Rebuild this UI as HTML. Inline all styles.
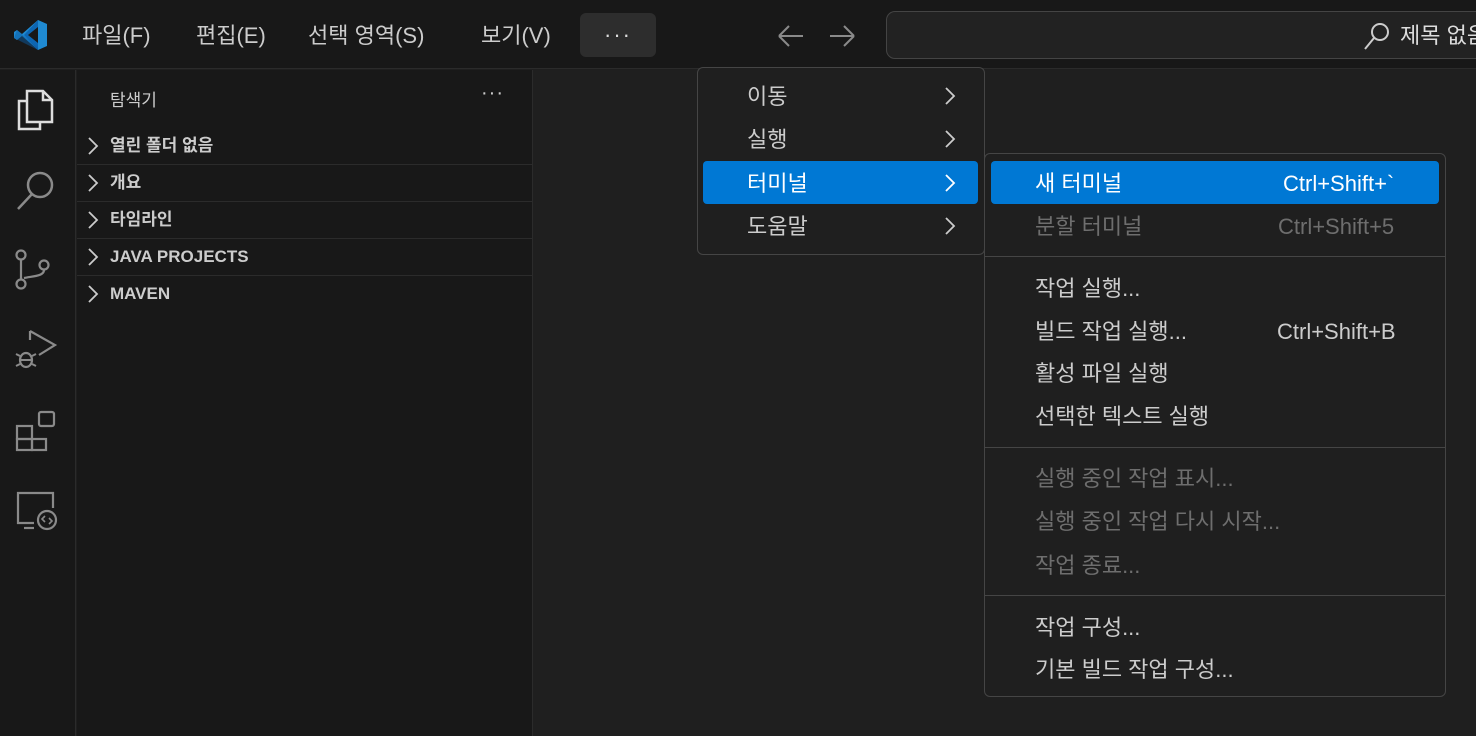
<!DOCTYPE html>
<html><head><meta charset="utf-8"><style>
*{margin:0;padding:0;box-sizing:border-box}
body{width:1476px;height:736px;overflow:hidden;background:#1f1f1f;font-family:"Liberation Sans","Noto Sans CJK KR",sans-serif;color:#ccc;position:relative}
.a{position:absolute;white-space:nowrap}
.t{font-size:22px;color:#ccc;line-height:30px}
.mi{position:absolute;font-size:22px;line-height:30px;color:#ccc;white-space:nowrap}
.dis{color:#6e6e6e}
.sc{position:absolute;font-size:22px;line-height:30px;white-space:nowrap}
.sep{position:absolute;left:1px;right:1px;height:1px;background:#454545}
.row{position:absolute;left:77px;width:455px;height:37px;border-bottom:1px solid #2b2b2b;font-size:17px;font-weight:bold;color:#ccc}
.row span{position:absolute;left:33px;top:7px;line-height:22px;height:22px}
.row svg{position:absolute;left:10px;top:9px}
</style></head><body>
<!-- title bar -->
<div class="a" style="left:0;top:0;width:1476px;height:69px;background:#181818;border-bottom:1px solid #2b2b2b"></div>
<svg class="a" style="left:14px;top:18px" width="34" height="34" viewBox="0 0 34 34"><path d="M24 2 L33 6 V28 L24 32 L8 18 L3 22 L0 20 V14 L3 12 L8 16 Z" fill="#1f8ad2"/><path d="M24 2 L10 17 L24 32 Z" fill="#0d66b3"/><path d="M24 9 V25 L14 17 Z" fill="#181818"/><path d="M3 12 L24 30 L24 32 L0 20 Z" fill="#0a5aa0" opacity=".5"/></svg>
<div class="a t" style="left:82px;top:21px">파일(F)</div>
<div class="a t" style="left:196px;top:21px">편집(E)</div>
<div class="a t" style="left:308px;top:21px">선택 영역(S)</div>
<div class="a t" style="left:481px;top:21px">보기(V)</div>
<div class="a" style="left:580px;top:13px;width:76px;height:44px;background:#2d2d2d;border-radius:6px"></div>
<div class="a" style="left:604px;top:22px;font-size:22px;color:#ddd;letter-spacing:2px">···</div>
<svg class="a" style="left:776px;top:22px" width="80" height="28" viewBox="0 0 80 28"><path d="M3 14 H27 M3 14 L13 4 M3 14 L13 24" stroke="#8a8a8a" stroke-width="2" fill="none"/><path d="M56 14 H80 M80 14 L70 4 M80 14 L70 24" stroke="#8a8a8a" stroke-width="2" fill="none" transform="translate(-2,0)"/></svg>
<div class="a" style="left:886px;top:11px;width:600px;height:48px;background:#222;border:1.5px solid #444;border-radius:9px"></div>
<svg class="a" style="left:1362px;top:21px" width="30" height="30" viewBox="0 0 30 30"><circle cx="18" cy="11" r="8" stroke="#ccc" stroke-width="2" fill="none"/><path d="M12 17 L3 28" stroke="#ccc" stroke-width="2"/></svg>
<div class="a t" style="left:1400px;top:21px;color:#ddd">제목 없음</div>
<!-- activity bar -->
<div class="a" style="left:0;top:70px;width:76px;height:666px;background:#181818;border-right:1px solid #2b2b2b"></div>
<svg class="a" style="left:14px;top:88px" width="42" height="44" viewBox="0 0 42 44"><path d="M13 3 H29 L38 12 V34 H13 Z M29 3 V12 H38" stroke="#ddd" stroke-width="2.5" fill="none"/><path d="M13 13 H5 V41 H26 V34" stroke="#ddd" stroke-width="2.5" fill="none"/></svg>
<svg class="a" style="left:14px;top:168px" width="44" height="44" viewBox="0 0 44 44"><circle cx="26" cy="17" r="12" stroke="#8a8a8a" stroke-width="2.5" fill="none"/><path d="M18 26 L4 41" stroke="#8a8a8a" stroke-width="2.5"/></svg>
<svg class="a" style="left:14px;top:248px" width="44" height="44" viewBox="0 0 44 44"><circle cx="7" cy="7" r="4.5" stroke="#8a8a8a" stroke-width="2.2" fill="none"/><circle cx="7" cy="36" r="4.5" stroke="#8a8a8a" stroke-width="2.2" fill="none"/><circle cx="30" cy="17" r="4.5" stroke="#8a8a8a" stroke-width="2.2" fill="none"/><path d="M7 12 V31 M30 22 C30 28 20 28 10 30" stroke="#8a8a8a" stroke-width="2.2" fill="none"/></svg>
<svg class="a" style="left:14px;top:328px" width="44" height="44" viewBox="0 0 44 44"><path d="M16 3 L41 17 L25 27" stroke="#8a8a8a" stroke-width="2.2" fill="none"/><path d="M16 3 V12" stroke="#8a8a8a" stroke-width="2.2"/><ellipse cx="12" cy="32" rx="6" ry="7" stroke="#8a8a8a" stroke-width="2.2" fill="none"/><path d="M2 26 L6 28 M2 38 L6 36 M22 26 L18 28 M22 38 L18 36 M6 32 H18" stroke="#8a8a8a" stroke-width="2"/></svg>
<svg class="a" style="left:14px;top:408px" width="44" height="44" viewBox="0 0 44 44"><rect x="3" y="18" width="15" height="13" stroke="#8a8a8a" stroke-width="2.2" fill="none"/><rect x="3" y="31" width="15" height="11" stroke="#8a8a8a" stroke-width="2.2" fill="none"/><rect x="18" y="31" width="14" height="11" stroke="#8a8a8a" stroke-width="2.2" fill="none"/><rect x="25" y="4" width="15" height="14" rx="2" stroke="#8a8a8a" stroke-width="2.2" fill="none"/></svg>
<svg class="a" style="left:14px;top:488px" width="44" height="44" viewBox="0 0 44 44"><path d="M20 35 H4 V5 H39 V20" stroke="#8a8a8a" stroke-width="2.2" fill="none"/><path d="M10 40 H20" stroke="#8a8a8a" stroke-width="2.2"/><circle cx="33" cy="32" r="9" stroke="#8a8a8a" stroke-width="2.2" fill="none"/><path d="M31 28 L28 31 L31 34 M35 30 L38 33 L35 36" stroke="#8a8a8a" stroke-width="1.6" fill="none"/></svg>
<!-- sidebar -->
<div class="a" style="left:77px;top:70px;width:456px;height:666px;background:#181818;border-right:1px solid #2b2b2b"></div>
<div class="a" style="left:110px;top:86px;font-size:17px;color:#ccc">탐색기</div>
<div class="a" style="left:481px;top:82px;font-size:20px;color:#ccc;letter-spacing:1px">···</div>
<div class="row" style="top:128px"><svg width="12" height="18" viewBox="0 0 12 18"><path d="M2 1 L10 9 L2 17" stroke="#ccc" stroke-width="1.8" fill="none"/></svg><span>열린 폴더 없음</span></div>
<div class="row" style="top:165px"><svg width="12" height="18" viewBox="0 0 12 18"><path d="M2 1 L10 9 L2 17" stroke="#ccc" stroke-width="1.8" fill="none"/></svg><span>개요</span></div>
<div class="row" style="top:202px"><svg width="12" height="18" viewBox="0 0 12 18"><path d="M2 1 L10 9 L2 17" stroke="#ccc" stroke-width="1.8" fill="none"/></svg><span>타임라인</span></div>
<div class="row" style="top:239px"><svg width="12" height="18" viewBox="0 0 12 18"><path d="M2 1 L10 9 L2 17" stroke="#ccc" stroke-width="1.8" fill="none"/></svg><span>JAVA PROJECTS</span></div>
<div class="row" style="top:276px;border-bottom:none"><svg width="12" height="18" viewBox="0 0 12 18"><path d="M2 1 L10 9 L2 17" stroke="#ccc" stroke-width="1.8" fill="none"/></svg><span>MAVEN</span></div>
<!-- menu 1 -->
<div class="a" style="left:697px;top:67px;width:288px;height:188px;background:#1f1f1f;border:1px solid #454545;border-radius:6px"></div>
<div class="a" style="left:703px;top:161px;width:275px;height:43px;background:#0078d4;border-radius:4px"></div>
<div class="mi" style="left:747px;top:82px">이동</div>
<div class="mi" style="left:747px;top:125px">실행</div>
<div class="mi" style="left:747px;top:169px;color:#fff">터미널</div>
<div class="mi" style="left:747px;top:212px">도움말</div>
<svg class="a" style="left:944px;top:86px" width="12" height="150" viewBox="0 0 12 150"><g stroke="#ccc" stroke-width="1.8" fill="none"><path d="M2 2 L10 10 L2 18"/><path d="M2 45 L10 53 L2 61"/><path d="M2 89 L10 97 L2 105" stroke="#fff"/><path d="M2 132 L10 140 L2 148"/></g></svg>
<!-- submenu -->
<div class="a" style="left:984px;top:153px;width:462px;height:544px;background:#1f1f1f;border:1px solid #454545;border-radius:6px"></div>
<div class="a" style="left:991px;top:161px;width:448px;height:43px;background:#0078d4;border-radius:4px"></div>
<div class="mi" style="left:1035px;top:169px;color:#fff">새 터미널</div>
<div class="sc" style="left:1283px;top:169px;color:#fff">Ctrl+Shift+`</div>
<div class="mi dis" style="left:1035px;top:212px">분할 터미널</div>
<div class="sc dis" style="left:1278px;top:212px">Ctrl+Shift+5</div>
<div class="sep" style="left:985px;width:460px;top:256px"></div>
<div class="mi" style="left:1035px;top:274px">작업 실행...</div>
<div class="mi" style="left:1035px;top:317px">빌드 작업 실행...</div>
<div class="sc" style="left:1277px;top:317px;color:#ccc">Ctrl+Shift+B</div>
<div class="mi" style="left:1035px;top:359px">활성 파일 실행</div>
<div class="mi" style="left:1035px;top:402px">선택한 텍스트 실행</div>
<div class="sep" style="left:985px;width:460px;top:447px"></div>
<div class="mi dis" style="left:1035px;top:464px">실행 중인 작업 표시...</div>
<div class="mi dis" style="left:1035px;top:507px">실행 중인 작업 다시 시작...</div>
<div class="mi dis" style="left:1035px;top:551px">작업 종료...</div>
<div class="sep" style="left:985px;width:460px;top:595px"></div>
<div class="mi" style="left:1035px;top:613px">작업 구성...</div>
<div class="mi" style="left:1035px;top:655px">기본 빌드 작업 구성...</div>
</body></html>
